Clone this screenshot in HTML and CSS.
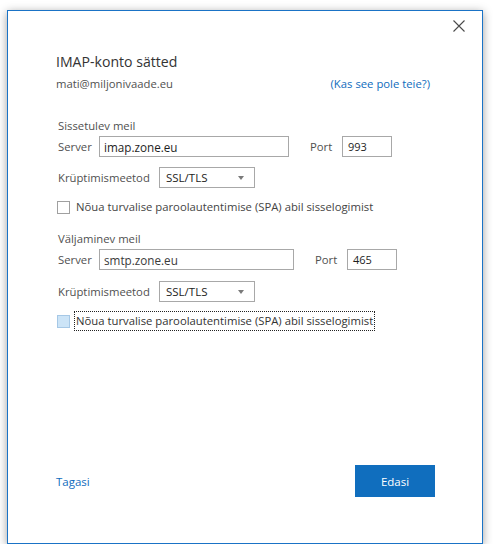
FILE: index.html
```html
<!DOCTYPE html>
<html lang="et">
<head>
<meta charset="utf-8">
<title>IMAP-konto sätted</title>
<link rel="stylesheet" href="styles.css">
</head>
<body>
<div class="window">
  <div class="titlebar">
    <button class="close" aria-label="Sulge">
      <svg width="12" height="12" viewBox="0 0 12 12"><path d="M0.5 0.5 L11.5 11.5 M11.5 0.5 L0.5 11.5" stroke="#4a4a4a" stroke-width="1.1" fill="none"/></svg>
    </button>
  </div>
  <div class="content">
    <h1 class="title">IMAP-konto sätted</h1>
    <div class="account-row">
      <span class="email">mati@miljonivaade.eu</span>
      <a class="link" href="#">(Kas see pole teie?)</a>
    </div>

    <section class="group group-in">
      <div class="group-label">Sissetulev meil</div>
      <div class="row">
        <span class="lbl lbl-server">Server</span>
        <div class="field field-server">imap.zone.eu</div>
        <span class="lbl lbl-port">Port</span>
        <div class="field field-port">993</div>
      </div>
      <div class="row row-enc">
        <span class="lbl lbl-enc">Krüptimismeetod</span>
        <div class="select">SSL/TLS<span class="arrow"></span></div>
      </div>
      <div class="check-row">
        <span class="checkbox"></span>
        <span class="check-text">Nõua turvalise paroolautentimise (SPA) abil sisselogimist</span>
      </div>
    </section>

    <section class="group group-out">
      <div class="group-label">Väljaminev meil</div>
      <div class="row">
        <span class="lbl lbl-server">Server</span>
        <div class="field field-server wide">smtp.zone.eu</div>
        <span class="lbl lbl-port">Port</span>
        <div class="field field-port">465</div>
      </div>
      <div class="row row-enc">
        <span class="lbl lbl-enc">Krüptimismeetod</span>
        <div class="select">SSL/TLS<span class="arrow"></span></div>
      </div>
      <div class="check-row">
        <span class="checkbox hover"></span>
        <span class="check-text focus">Nõua turvalise paroolautentimise (SPA) abil sisselogimist</span>
      </div>
    </section>

    <div class="footer">
      <a class="back" href="#">Tagasi</a>
      <button class="next">Edasi</button>
    </div>
  </div>
</div>
</body>
</html>
```

FILE: styles.css
```css
html, body {
  margin: 0;
  padding: 0;
  background: #ffffff;
}

body {
  font-family: "Open Sans", "Noto Sans", sans-serif;
  color: #444444;
}

.window {
  box-sizing: border-box;
  margin: 10px 0 0 7px;
  width: 476px;
  height: 534px;
  border: 1px solid #1a73c6;
  background: #ffffff;
  box-shadow: 0 2px 9px rgba(0, 0, 0, 0.38);
  display: flex;
  flex-direction: column;
}

.titlebar {
  display: flex;
  justify-content: flex-end;
  padding: 9px 17px 0 0;
  height: 30px;
  box-sizing: border-box;
}

.close {
  border: 0;
  background: transparent;
  padding: 0;
  width: 12px;
  height: 12px;
  display: block;
}

.close svg {
  display: block;
}

.content {
  flex: 1;
  display: flex;
  flex-direction: column;
  padding: 0 48px 46px 48px;
}

.title {
  margin: 11px 0 0 0;
  font-size: 14.1px;
  line-height: 20px;
  font-weight: 400;
  color: #333333;
}

.account-row {
  margin-top: 4px;
  display: flex;
  justify-content: space-between;
  font-size: 11.3px;
  line-height: 16px;
}

.email {
  color: #505050;
}

.link {
  color: #0f6cbd;
  text-decoration: none;
  margin-right: 4px;
}

.group {
  padding-left: 2px;
  font-size: 11.3px;
}

.group-in {
  margin-top: 26px;
}

.group-out {
  margin-top: 14px;
}

.group-label {
  line-height: 16px;
  color: #505050;
}

.row {
  display: flex;
  align-items: center;
  margin-top: 2px;
  height: 21px;
}

.row-enc {
  margin-top: 10px;
}

.group-out .row-enc {
  margin-top: 11px;
}

.lbl {
  color: #505050;
  line-height: 16px;
}

.lbl-server {
  width: 41px;
}

.lbl-enc {
  width: 101px;
}

.lbl-port {
  margin-left: 21px;
  width: 32px;
}

.field {
  box-sizing: border-box;
  height: 21px;
  border: 1px solid #a8a8a8;
  background: #ffffff;
  color: #1e1e1e;
  display: flex;
  align-items: center;
}

.field-server {
  width: 190px;
  padding-left: 4px;
  font-size: 11.7px;
}

.field-server.wide {
  width: 195px;
  color: #3a3a3a;
}

.field-port {
  width: 50px;
  padding-left: 5px;
  font-size: 11px;
}

.select {
  box-sizing: border-box;
  width: 96px;
  height: 21px;
  border: 1px solid #a8a8a8;
  background: #ffffff;
  color: #222222;
  padding: 0 10px 0 6px;
  display: flex;
  align-items: center;
  justify-content: space-between;
  font-size: 11.5px;
}

.arrow {
  width: 0;
  height: 0;
  border-left: 3.5px solid transparent;
  border-right: 3.5px solid transparent;
  border-top: 4px solid #7a7a7a;
}

.check-row {
  display: flex;
  align-items: center;
  height: 20px;
  margin-top: 9px;
}

.checkbox {
  box-sizing: border-box;
  width: 13px;
  height: 13px;
  border: 1px solid #a0a0a0;
  background: #ffffff;
  margin-left: -1px;
}

.checkbox.hover {
  background: #cce4f7;
  border-color: #a6c8e6;
}

.check-text {
  margin-left: 4px;
  padding: 1px 1px;
  line-height: 16px;
  color: #444444;
  border: 1px dotted transparent;
}

.check-text.focus {
  border-color: #222222;
  color: #333333;
}

.footer {
  margin-top: auto;
  display: flex;
  justify-content: space-between;
  align-items: center;
}

.back {
  color: #0f6cbd;
  text-decoration: none;
  font-size: 11.5px;
}

.next {
  width: 80px;
  height: 32px;
  border: 0;
  margin-right: -1px;
  background: #106ebe;
  color: #ffffff;
  font-family: "Open Sans", "Noto Sans", sans-serif;
  font-size: 11.5px;
  padding: 0;
}
```
